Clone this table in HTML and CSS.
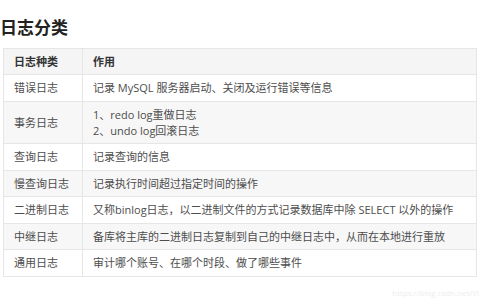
FILE: index.html
```html
<!DOCTYPE html>
<html lang="zh">
<head>
<meta charset="utf-8">
<link rel="stylesheet" href="styles.css">
</head>
<body>
<h2 class="title">日志分类</h2>
<table class="log-table">
  <thead>
    <tr><th class="col-type">日志种类</th><th>作用</th></tr>
  </thead>
  <tbody>
    <tr><td>错误日志</td><td>记录 MySQL 服务器启动、关闭及运行错误等信息</td></tr>
    <tr class="alt"><td>事务日志</td><td>1、redo log重做日志<br>2、undo log回滚日志</td></tr>
    <tr><td>查询日志</td><td>记录查询的信息</td></tr>
    <tr class="alt"><td>慢查询日志</td><td>记录执行时间超过指定时间的操作</td></tr>
    <tr><td>二进制日志</td><td>又称binlog日志，以二进制文件的方式记录数据库中除 SELECT 以外的操作</td></tr>
    <tr class="alt"><td>中继日志</td><td>备库将主库的二进制日志复制到自己的中继日志中，从而在本地进行重放</td></tr>
    <tr><td>通用日志</td><td>审计哪个账号、在哪个时段、做了哪些事件</td></tr>
  </tbody>
</table>
<div class="watermark">https://blog.csdn.net/Yi</div>
</body>
</html>
```
FILE: styles.css
```css
html, body {
  margin: 0;
  padding: 0;
  background: #fff;
}
body {
  font-family: "Open Sans", "Noto Sans CJK SC", sans-serif;
  color: #4d4d4d;
  position: relative;
  width: 480px;
  height: 300px;
  overflow: hidden;
}
.title {
  margin: 0;
  padding: 17px 0 0 0;
  font-size: 17px;
  line-height: 22px;
  font-weight: 700;
  color: #222;
}
.log-table {
  margin: 9px 0 0 3px;
  width: 474px;
  border-collapse: collapse;
  font-size: 11px;
  line-height: 16px;
}
.log-table th,
.log-table td {
  border: 1px solid #e6e6e6;
  padding: 5px 10px 4.5px;
  text-align: left;
  vertical-align: middle;
}
.log-table th {
  background: #f5f5f6;
  font-weight: 700;
  color: #333;
  padding: 4.5px 10px;
}
.log-table .col-type {
  width: 58px;
}
.log-table tr.alt td {
  background: #f7f7f7;
}
.watermark {
  position: absolute;
  right: 1px;
  bottom: 2px;
  font-size: 8px;
  color: #ededed;
  font-family: "Open Sans", sans-serif;
}
```
